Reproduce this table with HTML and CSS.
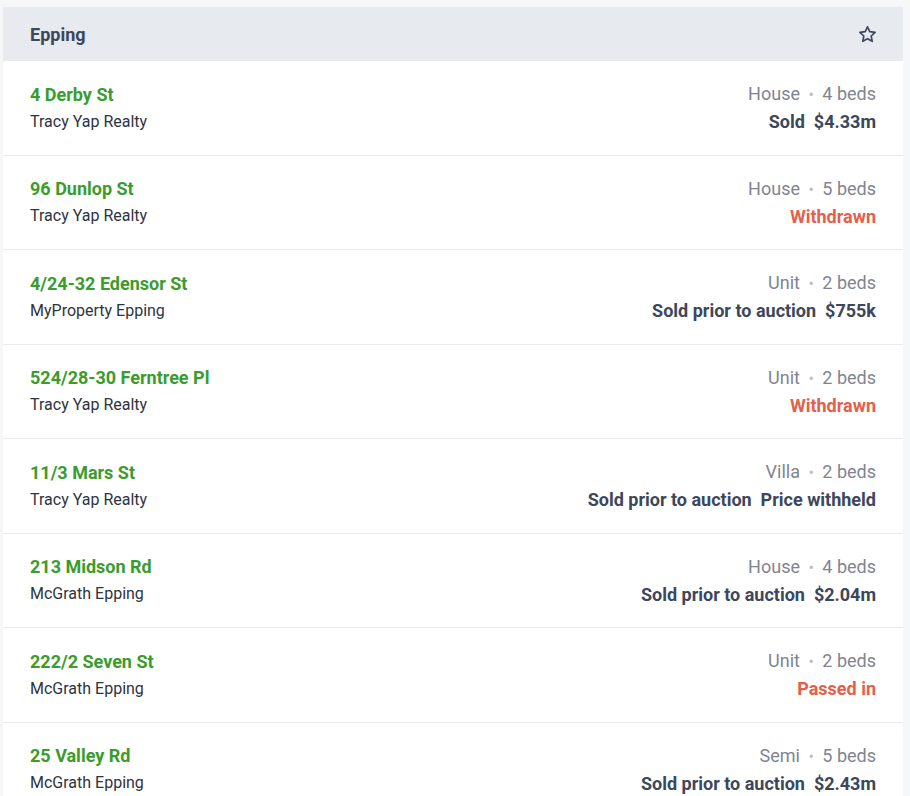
FILE: index.html
```html
<!DOCTYPE html>
<html lang="en">

<head>
    <meta charset="UTF-8">
    <meta name="viewport" content="width=device-width, initial-scale=1.0">
    <title>Epping sold listings</title>
    <link rel="stylesheet" href="styles.css">
</head>

<body>
    <div class="suburb-card">
        <div class="suburb-header">
            <h2>Epping</h2>
            <button class="star-button" aria-label="Save suburb">
                <svg width="21" height="21" viewBox="0 0 24 24" fill="none" stroke="#3c475b" stroke-width="1.9" stroke-linejoin="round">
                    <path d="M12 3.2l2.6 5.6 6.1.7-4.5 4.2 1.2 6.1L12 16.8l-5.4 3 1.2-6.1-4.5-4.2 6.1-.7z"/>
                </svg>
            </button>
        </div>

        <div class="listing">
            <div class="listing-left">
                <a class="address" href="#">4 Derby St</a>
                <span class="agency">Tracy Yap Realty</span>
            </div>
            <div class="listing-right">
                <span class="type">House <span class="dot">&bull;</span> 4 beds</span>
                <span class="result">Sold&nbsp; $4.33m</span>
            </div>
        </div>

        <div class="listing">
            <div class="listing-left">
                <a class="address" href="#">96 Dunlop St</a>
                <span class="agency">Tracy Yap Realty</span>
            </div>
            <div class="listing-right">
                <span class="type">House <span class="dot">&bull;</span> 5 beds</span>
                <span class="result warn">Withdrawn</span>
            </div>
        </div>

        <div class="listing">
            <div class="listing-left">
                <a class="address" href="#">4/24-32 Edensor St</a>
                <span class="agency">MyProperty Epping</span>
            </div>
            <div class="listing-right">
                <span class="type">Unit <span class="dot">&bull;</span> 2 beds</span>
                <span class="result">Sold prior to auction&nbsp; $755k</span>
            </div>
        </div>

        <div class="listing">
            <div class="listing-left">
                <a class="address" href="#">524/28-30 Ferntree Pl</a>
                <span class="agency">Tracy Yap Realty</span>
            </div>
            <div class="listing-right">
                <span class="type">Unit <span class="dot">&bull;</span> 2 beds</span>
                <span class="result warn">Withdrawn</span>
            </div>
        </div>

        <div class="listing">
            <div class="listing-left">
                <a class="address" href="#">11/3 Mars St</a>
                <span class="agency">Tracy Yap Realty</span>
            </div>
            <div class="listing-right">
                <span class="type">Villa <span class="dot">&bull;</span> 2 beds</span>
                <span class="result">Sold prior to auction&nbsp; Price withheld</span>
            </div>
        </div>

        <div class="listing">
            <div class="listing-left">
                <a class="address" href="#">213 Midson Rd</a>
                <span class="agency">McGrath Epping</span>
            </div>
            <div class="listing-right">
                <span class="type">House <span class="dot">&bull;</span> 4 beds</span>
                <span class="result">Sold prior to auction&nbsp; $2.04m</span>
            </div>
        </div>

        <div class="listing">
            <div class="listing-left">
                <a class="address" href="#">222/2 Seven St</a>
                <span class="agency">McGrath Epping</span>
            </div>
            <div class="listing-right">
                <span class="type">Unit <span class="dot">&bull;</span> 2 beds</span>
                <span class="result warn">Passed in</span>
            </div>
        </div>

        <div class="listing">
            <div class="listing-left">
                <a class="address" href="#">25 Valley Rd</a>
                <span class="agency">McGrath Epping</span>
            </div>
            <div class="listing-right">
                <span class="type">Semi <span class="dot">&bull;</span> 5 beds</span>
                <span class="result">Sold prior to auction&nbsp; $2.43m</span>
            </div>
        </div>
    </div>
</body>

</html>
```

FILE: styles.css
```css
/* Variables */
:root {
    --page-bg: #f6f7f9;
    --header-bg: #e7eaee;
    --line-color: #e9ebee;
    --text-dark: #3c475b;
    --text-body: #2e3440;
    --text-muted: #7f8590;
    --green: #3a9c2c;
    --warn: #e4604a;
    --row-padding: 27px;
}

/* Global Styles */
body {
    margin: 0;
    padding: 7px 7px 0 3px;
    background: var(--page-bg);
    font-family: Roboto, "Liberation Sans", sans-serif;
    color: var(--text-body);
}

.suburb-card {
    width: 900px;
    background: #fff;
}

/* Header */
.suburb-header {
    display: flex;
    align-items: center;
    justify-content: space-between;
    height: 54px;
    padding: 0 var(--row-padding);
    background: var(--header-bg);
}

.suburb-header h2 {
    margin: 0;
    font-size: 18px;
    font-weight: 700;
    color: var(--text-dark);
}

.star-button {
    display: flex;
    background: none;
    border: none;
    padding: 0;
    margin-right: -2px;
    cursor: pointer;
}

/* Listing rows */
.listing {
    display: flex;
    justify-content: space-between;
    align-items: center;
    height: 93.5px;
    padding: 0 var(--row-padding);
    border-bottom: 1px solid var(--line-color);
}

.listing-left,
.listing-right {
    display: flex;
    flex-direction: column;
    line-height: 27px;
}

.listing-right {
    align-items: flex-end;
}

.address {
    font-size: 18px;
    font-weight: 700;
    color: var(--green);
    text-decoration: none;
}

.agency {
    font-size: 16px;
    color: var(--text-body);
}

.type {
    font-size: 18px;
    color: var(--text-muted);
}

.dot {
    color: #b9bdc3;
    font-size: 16px;
    margin: 0 4px;
}

.result {
    font-size: 18px;
    font-weight: 700;
    color: var(--text-dark);
}

.result.warn {
    color: var(--warn);
}
```
